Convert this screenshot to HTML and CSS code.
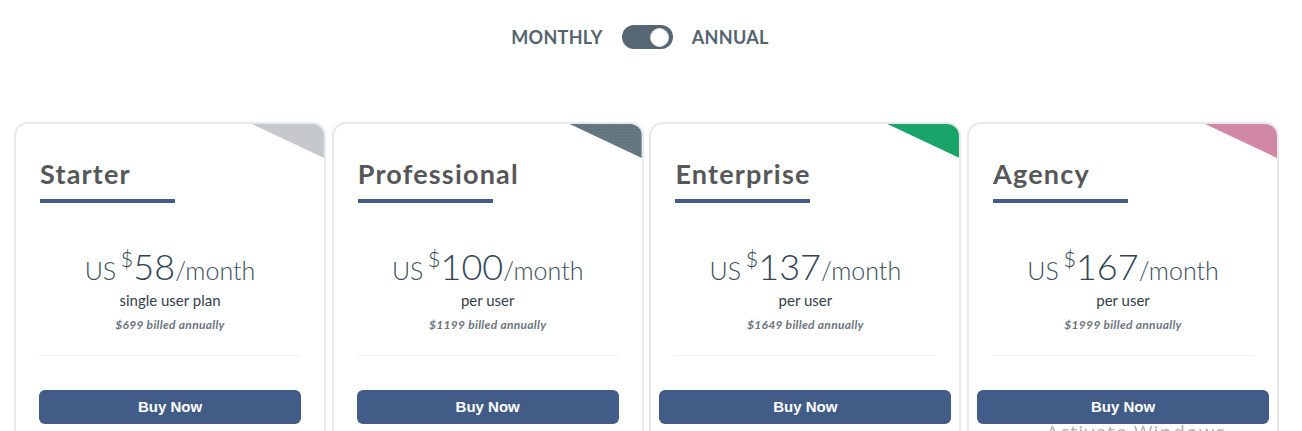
FILE: index.html
```html
<!DOCTYPE html>
<html lang="en">
<head>
<meta charset="utf-8">
<title>Pricing</title>
<link rel="stylesheet" href="styles.css">
</head>
<body>
<div class="page">
  <div class="period">
    <span class="period-label">MONTHLY</span>
    <span class="switch"><span class="knob"></span></span>
    <span class="period-label">ANNUAL</span>
  </div>
  <div class="plans">
    <div class="card">
      <span class="corner corner-starter"></span>
      <h2 class="plan-name">Starter</h2>
      <div class="price"><span class="cur">US</span> <sup class="dollar">$</sup><span class="amount">58</span><span class="per">/month</span></div>
      <div class="unit">single user plan</div>
      <div class="billed">$699 billed annually</div>
      <hr class="divider">
      <button class="buy">Buy Now</button>
    </div>
    <div class="card">
      <span class="corner corner-pro"></span>
      <h2 class="plan-name">Professional</h2>
      <div class="price"><span class="cur">US</span> <sup class="dollar">$</sup><span class="amount">100</span><span class="per">/month</span></div>
      <div class="unit">per user</div>
      <div class="billed">$1199 billed annually</div>
      <hr class="divider">
      <button class="buy">Buy Now</button>
    </div>
    <div class="card card-wide">
      <span class="corner corner-ent"></span>
      <h2 class="plan-name">Enterprise</h2>
      <div class="price"><span class="cur">US</span> <sup class="dollar">$</sup><span class="amount">137</span><span class="per">/month</span></div>
      <div class="unit">per user</div>
      <div class="billed">$1649 billed annually</div>
      <hr class="divider">
      <button class="buy">Buy Now</button>
    </div>
    <div class="card card-wide">
      <span class="corner corner-agency"></span>
      <h2 class="plan-name">Agency</h2>
      <div class="price"><span class="cur">US</span> <sup class="dollar">$</sup><span class="amount">167</span><span class="per">/month</span></div>
      <div class="unit">per user</div>
      <div class="billed">$1999 billed annually</div>
      <hr class="divider">
      <button class="buy">Buy Now</button>
    </div>
  </div>
</div>
<div class="watermark">Activate Windows</div>
</body>
</html>
```
FILE: styles.css
```css
html, body {
  margin: 0;
  padding: 0;
  overflow: hidden;
  background: #ffffff;
}
body {
  font-family: "Lato", "Liberation Sans", sans-serif;
  color: #333;
}
.page {
  padding: 0 22px 0 14px;
}
.period {
  display: flex;
  justify-content: center;
  align-items: center;
  gap: 19px;
  padding-top: 25px;
  height: 24px;
  margin-right: 14px;
}
.period-label {
  font-family: "Lato", sans-serif;
  font-weight: 700;
  font-size: 18px;
  color: #54636f;
  letter-spacing: 0.3px;
}
.switch {
  width: 51px;
  height: 24px;
  border-radius: 12px;
  background: #566773;
  display: flex;
  align-items: center;
  justify-content: flex-end;
  padding-right: 4px;
  box-sizing: border-box;
}
.knob {
  width: 19px;
  height: 19px;
  border-radius: 50%;
  background: #fff;
  border: 1px solid #dfe3e6;
  box-sizing: border-box;
}
.plans {
  display: grid;
  grid-template-columns: repeat(4, 312px);
  column-gap: 5.7px;
  margin-top: 73px;
}
.card {
  position: relative;
  height: 330px;
  border: 2px solid #e9e9e9;
  border-radius: 14px;
  overflow: hidden;
  padding: 0 23px;
  box-sizing: border-box;
  box-shadow: 0 0 2px rgba(0,0,0,0.04);
}
.corner {
  position: absolute;
  top: 0;
  right: 0;
  width: 72px;
  height: 34px;
  clip-path: polygon(0 0, 100% 0, 100% 100%);
}
.corner-starter { background: #c5c9ce; }
.corner-pro {
  background-color: #63757f;
  background-image: radial-gradient(rgba(255,255,255,0.08) 0.6px, transparent 0.8px);
  background-size: 3px 3px;
}
.corner-ent { background: #19a46a; }
.corner-agency { background: #d088a6; }
.plan-name {
  margin: 34px 0 0 1px;
  font-family: "Lato", sans-serif;
  font-weight: 700;
  font-size: 27px;
  line-height: 32px;
  color: #555759;
  letter-spacing: 1.2px;
  display: inline-block;
  padding-bottom: 9px;
  border-bottom: 4px solid #415c85;
  width: 135px;
  white-space: nowrap;
}
.price {
  text-align: center;
  margin-top: 46px;
  color: #2f4454;
  font-weight: 300;
  line-height: 34px;
  white-space: nowrap;
}
.cur, .per {
  font-size: 25px;
  font-weight: 300;
  color: #3b4d5c;
}
.dollar {
  font-size: 22px;
  font-weight: 300;
  vertical-align: 13px;
  line-height: 0;
}
.amount {
  font-size: 36px;
  font-weight: 300;
}
.unit {
  text-align: center;
  font-size: 15px;
  color: #33404b;
  margin-top: 0;
}
.billed {
  text-align: center;
  font-size: 12px;
  font-weight: 700;
  font-style: italic;
  color: #6c7580;
  margin-top: 8px;
  letter-spacing: 0.3px;
}
.divider {
  border: 0;
  height: 1px;
  background: #f1f1f1;
  margin: 23px 0 0 0;
}
.buy {
  display: block;
  width: 100%;
  height: 34px;
  margin-top: 34px;
  border: 0;
  border-radius: 6px;
  background: #415d87;
  color: #fff;
  font-family: "Liberation Sans", Arial, sans-serif;
  font-weight: 700;
  font-size: 15px;
  line-height: 32px;
  cursor: pointer;
}
.card-wide .buy {
  width: calc(100% + 30px);
  margin-left: -15px;
}
.watermark {
  position: fixed;
  left: 1046px;
  top: 421px;
  font-family: "Open Sans", sans-serif;
  font-size: 20px;
  line-height: 24px;
  color: #b0b0b0;
  letter-spacing: 1px;
}
```
